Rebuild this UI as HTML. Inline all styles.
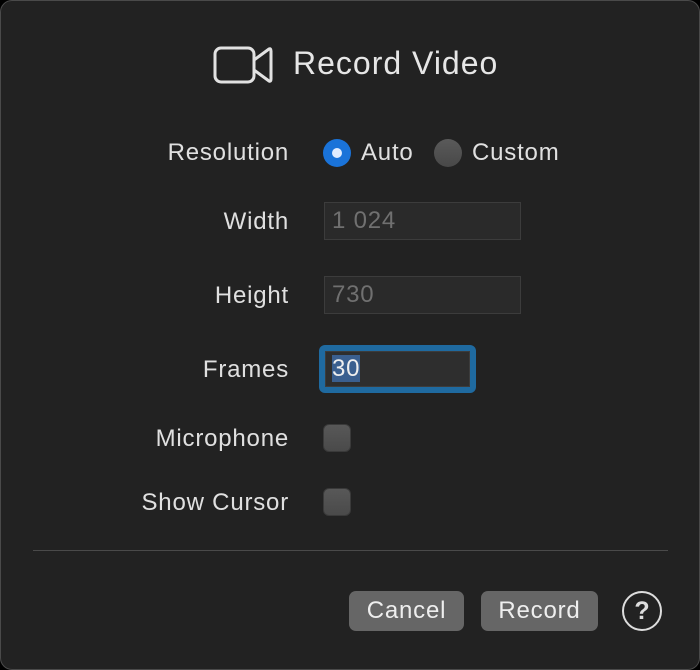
<html><head><style>
body{margin:0;background:#000;width:700px;height:670px;overflow:hidden;font-family:"Liberation Sans",sans-serif;}
.win{position:absolute;left:0;top:0;width:698px;height:668px;background:#222;border:1px solid #4a4a4a;border-radius:12px;}
.a{position:absolute;color:#e0e0e0;letter-spacing:0.8px;}
.lbl{font-size:24px;right:410px;text-align:right;}
.fld{position:absolute;background:#2a2a2a;border:1px solid #3c3c3c;color:#707070;font-size:24px;box-sizing:border-box;padding-left:7px;line-height:36px;letter-spacing:0.8px;}
.cb{position:absolute;width:28px;height:28px;border-radius:6px;background:linear-gradient(#585858,#4a4a4a);box-sizing:border-box;border:1px solid #3a3a3a;}
.btn{position:absolute;height:40px;border-radius:7px;background:#666;color:#eee;font-size:24px;text-align:center;line-height:39px;letter-spacing:0.8px;}
</style></head><body><div class="win">
<svg class="a" style="left:212px;top:44px" width="60" height="40" viewBox="0 0 60 40"><rect x="2" y="3" width="39" height="34" rx="6" fill="none" stroke="#e2e2e2" stroke-width="3"/><path d="M41 15 L56 4 Q58 3 58 6 V34 Q58 37 56 36 L41 25" fill="none" stroke="#e2e2e2" stroke-width="3" stroke-linejoin="round"/></svg>
<div class="a" style="left:292px;top:44px;font-size:32px;color:#e6e6e6;letter-spacing:1px">Record Video</div>
<div class="a lbl" style="top:138px">Resolution</div>
<div class="a" style="left:322px;top:138px;width:28px;height:28px;border-radius:50%;background:#1a73d9"></div>
<div class="a" style="left:331px;top:147px;width:10px;height:10px;border-radius:50%;background:#e0ecff"></div>
<div class="a" style="left:360px;top:138px;font-size:24px">Auto</div>
<div class="a" style="left:433px;top:138px;width:28px;height:28px;border-radius:50%;background:linear-gradient(#5a5a5a,#484848)"></div>
<div class="a" style="left:471px;top:138px;font-size:24px">Custom</div>
<div class="a lbl" style="top:207px">Width</div>
<div class="fld" style="left:323px;top:201px;width:197px;height:38px">1 024</div>
<div class="a lbl" style="top:281px">Height</div>
<div class="fld" style="left:323px;top:275px;width:197px;height:38px">730</div>
<div class="a lbl" style="top:355px">Frames</div>
<div class="a" style="left:318px;top:344px;width:157px;height:48px;border-radius:6px;background:#1f6aa0"></div>
<div class="fld" style="left:324px;top:350px;width:145px;height:36px;background:#2e2e2e;color:#eee;padding-left:6px;line-height:34px"><span style="background:#3a5f8f">30</span></div>
<div class="a lbl" style="top:424px">Microphone</div>
<div class="cb" style="left:322px;top:423px"></div>
<div class="a lbl" style="top:488px">Show Cursor</div>
<div class="cb" style="left:322px;top:487px"></div>
<div class="a" style="left:32px;top:549px;width:635px;height:1px;background:#4a4a4a"></div>
<div class="btn" style="left:348px;top:590px;width:115px">Cancel</div>
<div class="btn" style="left:480px;top:590px;width:117px">Record</div>
<div class="a" style="left:621px;top:590px;width:36px;height:36px;border:2px solid #ddd;border-radius:50%;text-align:center;line-height:37px;font-size:25px;font-weight:bold;color:#ddd;letter-spacing:0">?</div>
</div></body></html>
